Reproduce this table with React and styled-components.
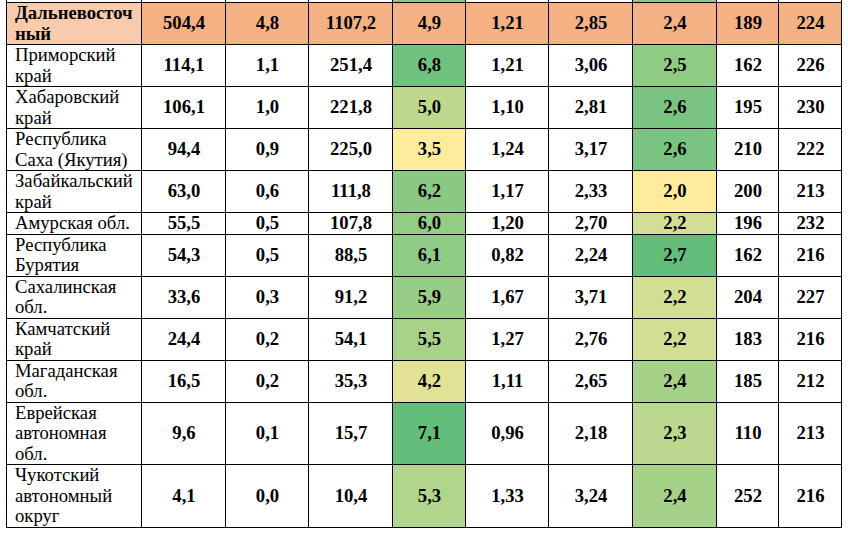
import React from 'react'
import styled, { createGlobalStyle } from 'styled-components'

const GlobalStyle = createGlobalStyle`
  html, body {
    margin: 0;
    padding: 0;
    background: #ffffff;
    font-family: "Liberation Serif";
  }
`

const Page = styled.div`
  width: 848px;
  height: 534px;
  overflow: hidden;
  padding-left: 6px;
  box-sizing: border-box;
`

// black background shows through the 1px gaps as cell borders
const Grid = styled.div`
  display: grid;
  grid-template-columns: 134px 83px 82px 83px 72px 82px 83px 83px 61px 62px;
  grid-auto-rows: auto;
  gap: 1px;
  padding: 0 1px 1px 1px;
  width: max-content;
  background: #000000;
  font-family: "Liberation Serif";
  font-size: 18.67px;
  line-height: 20.5px;
  color: #000000;
`

const Cell = styled.div`
  display: flex;
  align-items: center;
  justify-content: ${(p) => (p.$name ? 'flex-start' : 'center')};
  padding: 0 7px 0 8px;
  font-family: "Liberation Serif";
  font-weight: ${(p) => (p.$bold ? 700 : 400)};
  background: ${(p) => p.$bg || '#ffffff'};
`

const Sliver = styled.div`
  height: 2px;
  background: ${(p) => p.$bg || '#ffffff'};
`

const total = ['Дальневосточный', '504,4', '4,8', '1107,2', '4,9', '1,21', '2,85', '2,4', '189', '224']

const rows = [
  ['Приморский край', '114,1', '1,1', '251,4', '6,8', '1,21', '3,06', '2,5', '162', '226'],
  ['Хабаровский край', '106,1', '1,0', '221,8', '5,0', '1,10', '2,81', '2,6', '195', '230'],
  ['Республика Саха (Якутия)', '94,4', '0,9', '225,0', '3,5', '1,24', '3,17', '2,6', '210', '222'],
  ['Забайкальский край', '63,0', '0,6', '111,8', '6,2', '1,17', '2,33', '2,0', '200', '213'],
  ['Амурская обл.', '55,5', '0,5', '107,8', '6,0', '1,20', '2,70', '2,2', '196', '232'],
  ['Республика Бурятия', '54,3', '0,5', '88,5', '6,1', '0,82', '2,24', '2,7', '162', '216'],
  ['Сахалинская обл.', '33,6', '0,3', '91,2', '5,9', '1,67', '3,71', '2,2', '204', '227'],
  ['Камчатский край', '24,4', '0,2', '54,1', '5,5', '1,27', '2,76', '2,2', '183', '216'],
  ['Магаданская обл.', '16,5', '0,2', '35,3', '4,2', '1,11', '2,65', '2,4', '185', '212'],
  ['Еврейская автономная обл.', '9,6', '0,1', '15,7', '7,1', '0,96', '2,18', '2,3', '110', '213'],
  ['Чукотский автономный округ', '4,1', '0,0', '10,4', '5,3', '1,33', '3,24', '2,4', '252', '216']
]

// excel-like colour scale, yellow (low) -> green (high)
const LOW = [255, 235, 156]
const HIGH = [99, 190, 123]
const num = (s) => parseFloat(s.replace(',', '.'))

const scaleFor = (col) => {
  const vals = rows.map((r) => num(r[col]))
  const min = Math.min(...vals)
  const max = Math.max(...vals)
  return (s) => {
    const t = (num(s) - min) / (max - min)
    const c = LOW.map((l, i) => Math.round(l + (HIGH[i] - l) * t))
    return `rgb(${c.join(',')})`
  }
}

const scaled = { 4: scaleFor(4), 7: scaleFor(7) }

const App = () => {
  return (
    <Page>
      <GlobalStyle />
      <Grid>
        {total.map((v, i) => (
          <Sliver key={'s' + i} $bg={i === 4 || i === 7 ? '#8ccb81' : null} />
        ))}
        {total.map((v, i) => (
          <Cell key={'t' + i} $name={i === 0} $bold $bg={i === 0 ? '#f8cbad' : '#f4b183'}>
            {i === 0 ? (
              <span>
                Дальневосточ
                <br />
                ный
              </span>
            ) : (
              v
            )}
          </Cell>
        ))}
        {rows.map((r, ri) =>
          r.map((v, i) => (
            <Cell key={ri + '-' + i} $name={i === 0} $bold={i !== 0} $bg={scaled[i] ? scaled[i](v) : null}>
              {v}
            </Cell>
          ))
        )}
      </Grid>
    </Page>
  )
}

export default App
